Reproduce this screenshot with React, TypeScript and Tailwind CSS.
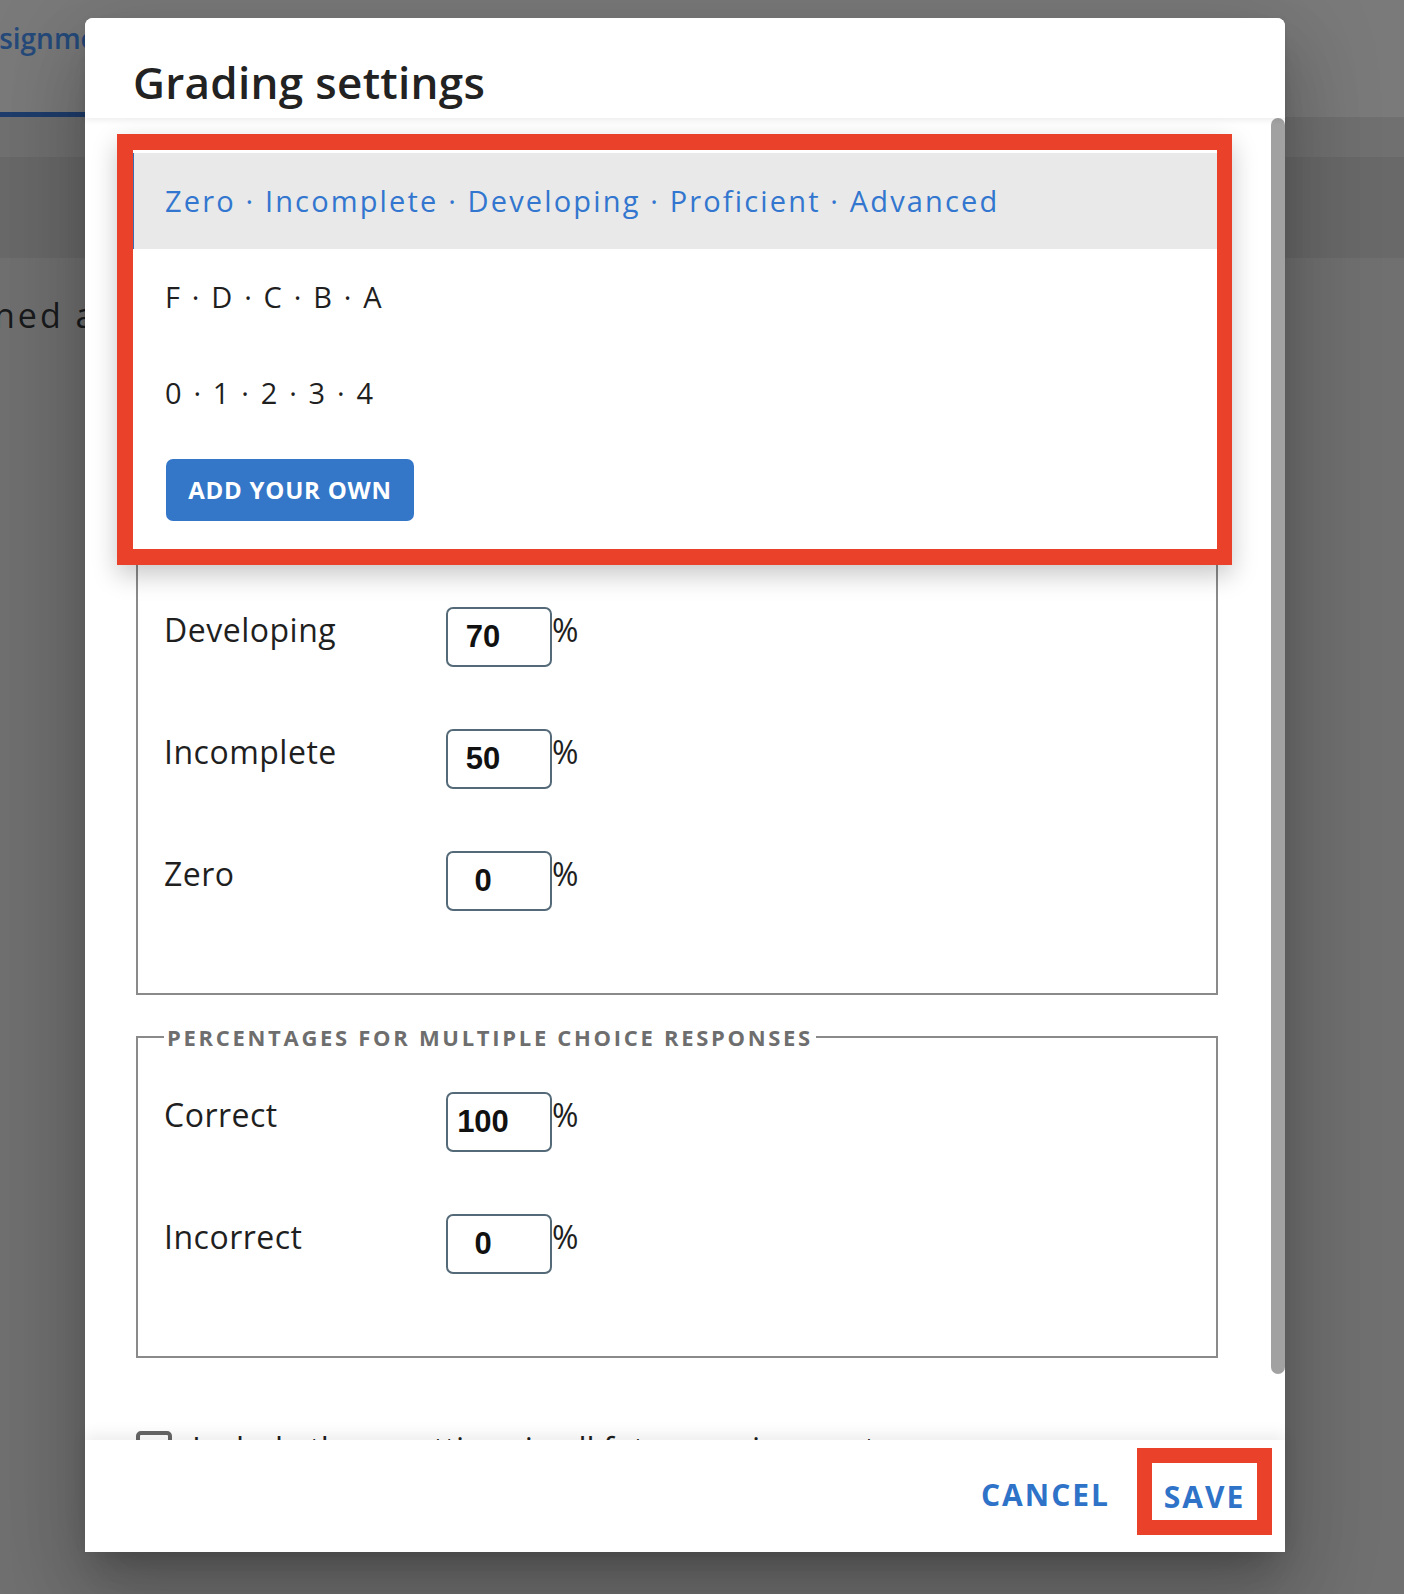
type Row = { label: string; value: string };

const gradeRows: Row[] = [
  { label: "Developing", value: "70" },
  { label: "Incomplete", value: "50" },
  { label: "Zero", value: "0" },
];

const choiceRows: Row[] = [
  { label: "Correct", value: "100" },
  { label: "Incorrect", value: "0" },
];

const scales = [
  "Zero · Incomplete · Developing · Proficient · Advanced",
  "F · D · C · B · A",
  "0 · 1 · 2 · 3 · 4",
];

function PercentRow({ label, value }: Row) {
  return (
    <div className="flex items-start">
      <span className="w-[282px] text-[32px] leading-[45px] tracking-[0.5px] text-[#1f1f1f]">
        {label}
      </span>
      <input
        readOnly
        value={value}
        className="h-[60px] w-[106px] rounded-[7px] border-2 border-[#546a78] bg-white pl-[8px] pr-[40px] text-center font-['Liberation_Sans',Arial,sans-serif] text-[31px] font-bold text-[#111] outline-none"
      />
      <span className="text-[32px] leading-[45px] text-[#1f1f1f]">%</span>
    </div>
  );
}

function PercentFieldset({
  title,
  rows,
  className = "",
  rowsClassName = "pt-[40px]",
}: {
  title?: string;
  rows: Row[];
  className?: string;
  rowsClassName?: string;
}) {
  return (
    <fieldset className={`border-2 border-[#8a8a8a] ${className}`}>
      {title && (
        <legend className="ml-[26px] px-[3px] text-[22px] font-bold leading-[30px] tracking-[2.7px] text-[#6e6e6e]">
          {title}
        </legend>
      )}
      <div
        className={`flex flex-col gap-[62px] pb-[82px] pl-[26px] ${rowsClassName}`}
      >
        {rows.map((r) => (
          <PercentRow key={r.label} {...r} />
        ))}
      </div>
    </fieldset>
  );
}

function ScaleMenu() {
  return (
    <div className="absolute left-[32px] top-[116px] z-20 w-[1115px] border-y-[16px] border-l-[16px] border-r-[15px] border-[#e9412a] bg-white shadow-[0_10px_24px_rgba(0,0,0,0.22)]">
      <ul className="pt-[3px]">
        {scales.map((s, i) => (
          <li
            key={s}
            className={`flex h-[96px] items-center pl-[32px] text-[29px] tracking-[2.15px] ${
              i === 0
                ? "bg-[#e9e9e9] text-[#3276cf] shadow-[inset_1px_0_0_#3a6cb0]"
                : "text-[#1f1f1f]"
            }`}
          >
            {s}
          </li>
        ))}
      </ul>
      <div className="pb-[28px] pl-[33px] pt-[18px]">
        <button className="h-[62px] w-[248px] rounded-[7px] bg-[#3476c8] text-[24px] font-bold tracking-[0.75px] text-white">
          ADD YOUR OWN
        </button>
      </div>
    </div>
  );
}

function GradingDialog() {
  return (
    <div className="relative flex w-[1200px] flex-col rounded-t-[8px] bg-white shadow-[0_22px_30px_-14px_rgba(0,0,0,0.2),0_48px_76px_6px_rgba(0,0,0,0.14),0_18px_92px_16px_rgba(0,0,0,0.12)]">
      <div className="relative z-10 h-[100px] rounded-t-[8px] bg-white pl-[48px] pt-[38px] shadow-[0_2px_6px_rgba(0,0,0,0.08)]">
        <h2 className="text-[44px] font-semibold leading-[52px] tracking-[0.3px] text-[#222]">
          Grading settings
        </h2>
      </div>

      <div className="flex h-[1322px]">
        <div className="flex-1 overflow-hidden pl-[51px] pr-[53px] pt-[189px]">
          <PercentFieldset rows={gradeRows} rowsClassName="pt-[298px]" />
          <PercentFieldset
            className="mt-[27px]"
            title="PERCENTAGES FOR MULTIPLE CHOICE RESPONSES"
            rows={choiceRows}
          />
          <label className="mt-[67px] flex items-center gap-[20px] text-[32px] leading-[48px] text-[#1f1f1f]">
            <span className="h-[36px] w-[36px] shrink-0 rounded-[5px] border-[4px] border-[#666]" />
            Include these settings in all future assignments
          </label>
        </div>
        <div className="w-[14px] bg-white">
          <div className="h-[1256px] rounded-full bg-[#a1a1a1]" />
        </div>
      </div>

      <div className="relative z-10 flex h-[112px] items-start justify-end bg-white pr-[13px] pt-[8px] shadow-[0_-6px_14px_rgba(0,0,0,0.07)]">
        <button className="mt-[27px] text-[30px] font-bold leading-[40px] tracking-[2px] text-[#2f73c9]">
          CANCEL
        </button>
        <div className="ml-[27px] border-[15px] border-[#e9412a]">
          <button className="h-[57px] w-[105px] pt-[11px] text-center text-[30px] font-bold leading-[40px] tracking-[2px] text-[#2f73c9]">
            <span className="block leading-[40px]">SAVE</span>
          </button>
        </div>
      </div>

      <ScaleMenu />
    </div>
  );
}

export default function App() {
  return (
    <div className="relative h-[1594px] w-full overflow-hidden bg-[#ebebeb] font-['Open_Sans',sans-serif]">
      <div className="h-[117px] bg-white">
        <div className="-ml-[33px] h-full w-[240px] border-b-[5px] border-[#4080e2] pt-[22px]">
          <span className="text-[28px] font-semibold leading-[32px] text-[#4f9bff]">
            Assignments
          </span>
        </div>
      </div>
      <div className="mt-[40px] h-[101px] bg-[#dcdcdc]" />
      <p className="-ml-[102px] mt-[35px] text-[34px] leading-[45px] tracking-[3px] text-[#34383c]">
        Assigned at
      </p>

      <div className="absolute inset-0 flex items-start bg-black/[0.52] pl-[85px] pt-[18px]">
        <GradingDialog />
      </div>
    </div>
  );
}
